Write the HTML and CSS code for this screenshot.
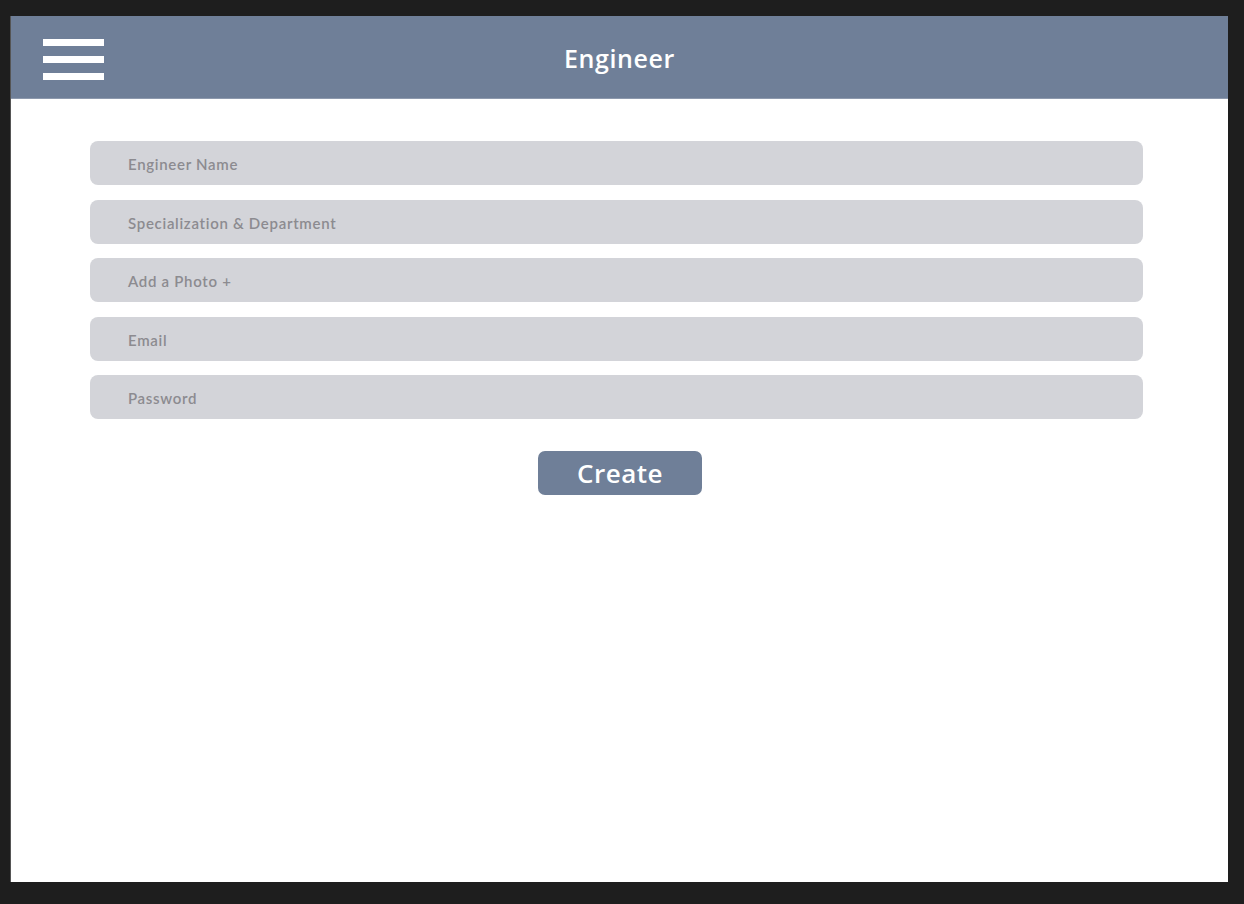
FILE: index.html
```html
<!DOCTYPE html>
<html>
<head>
<meta charset="utf-8">
<link rel="stylesheet" href="styles.css">
</head>
<body>
<div class="frame">
  <header class="topbar">
    <div class="burger"><span></span><span></span><span></span></div>
    <h1 class="title">Engineer</h1>
  </header>
  <main class="form">
    <div class="field">Engineer Name</div>
    <div class="field">Specialization &amp; Department</div>
    <div class="field">Add a Photo +</div>
    <div class="field">Email</div>
    <div class="field">Password</div>
    <div class="actions"><button class="create">Create</button></div>
  </main>
</div>
</body>
</html>
```
FILE: styles.css
```css
html, body {
  margin: 0;
  padding: 0;
  background: #1e1e1e;
}
body {
  padding: 16px 0 0 11px;
  font-family: "Lato", "Open Sans", sans-serif;
}
.frame {
  width: 1217px;
  height: 866px;
  background: #ffffff;
  box-shadow: -1px 0 0 #555;
}
.topbar {
  height: 83px;
  background: #6f7f98;
  display: flex;
  align-items: center;
  justify-content: center;
  position: relative;
  border-bottom: 1px solid #8d99ad;
  box-sizing: border-box;
}
.burger {
  position: absolute;
  left: 32px;
  top: 23px;
  width: 61px;
  display: flex;
  flex-direction: column;
  gap: 10.5px;
}
.burger span {
  display: block;
  height: 6.5px;
  background: #ffffff;
}
.title {
  margin: 0;
  color: #ffffff;
  font-size: 25px;
  font-weight: 600;
  letter-spacing: 0.6px;
  font-family: "Open Sans", sans-serif;
  transform: translateY(1px);
}
.form {
  padding: 42px 0 0 79px;
  width: 1053px;
  display: flex;
  flex-direction: column;
  gap: 14.5px;
}
.field {
  height: 44px;
  background: #d3d4d9;
  border-radius: 8px;
  padding-left: 38px;
  display: flex;
  align-items: center;
  color: #8c8b90;
  font-size: 15px;
  font-weight: 600;
  letter-spacing: 0.7px;
  padding-top: 2px;
  box-sizing: border-box;
}
.actions {
  display: flex;
  padding-left: 448px;
  margin-top: 17px;
}
.create {
  width: 164px;
  height: 44px;
  border: none;
  border-radius: 7px;
  background: #6f7f98;
  color: #ffffff;
  font-family: "Open Sans", sans-serif;
  font-size: 26px;
  font-weight: 600;
  letter-spacing: 0.5px;
  padding: 0;
  line-height: 44px;
}
```
